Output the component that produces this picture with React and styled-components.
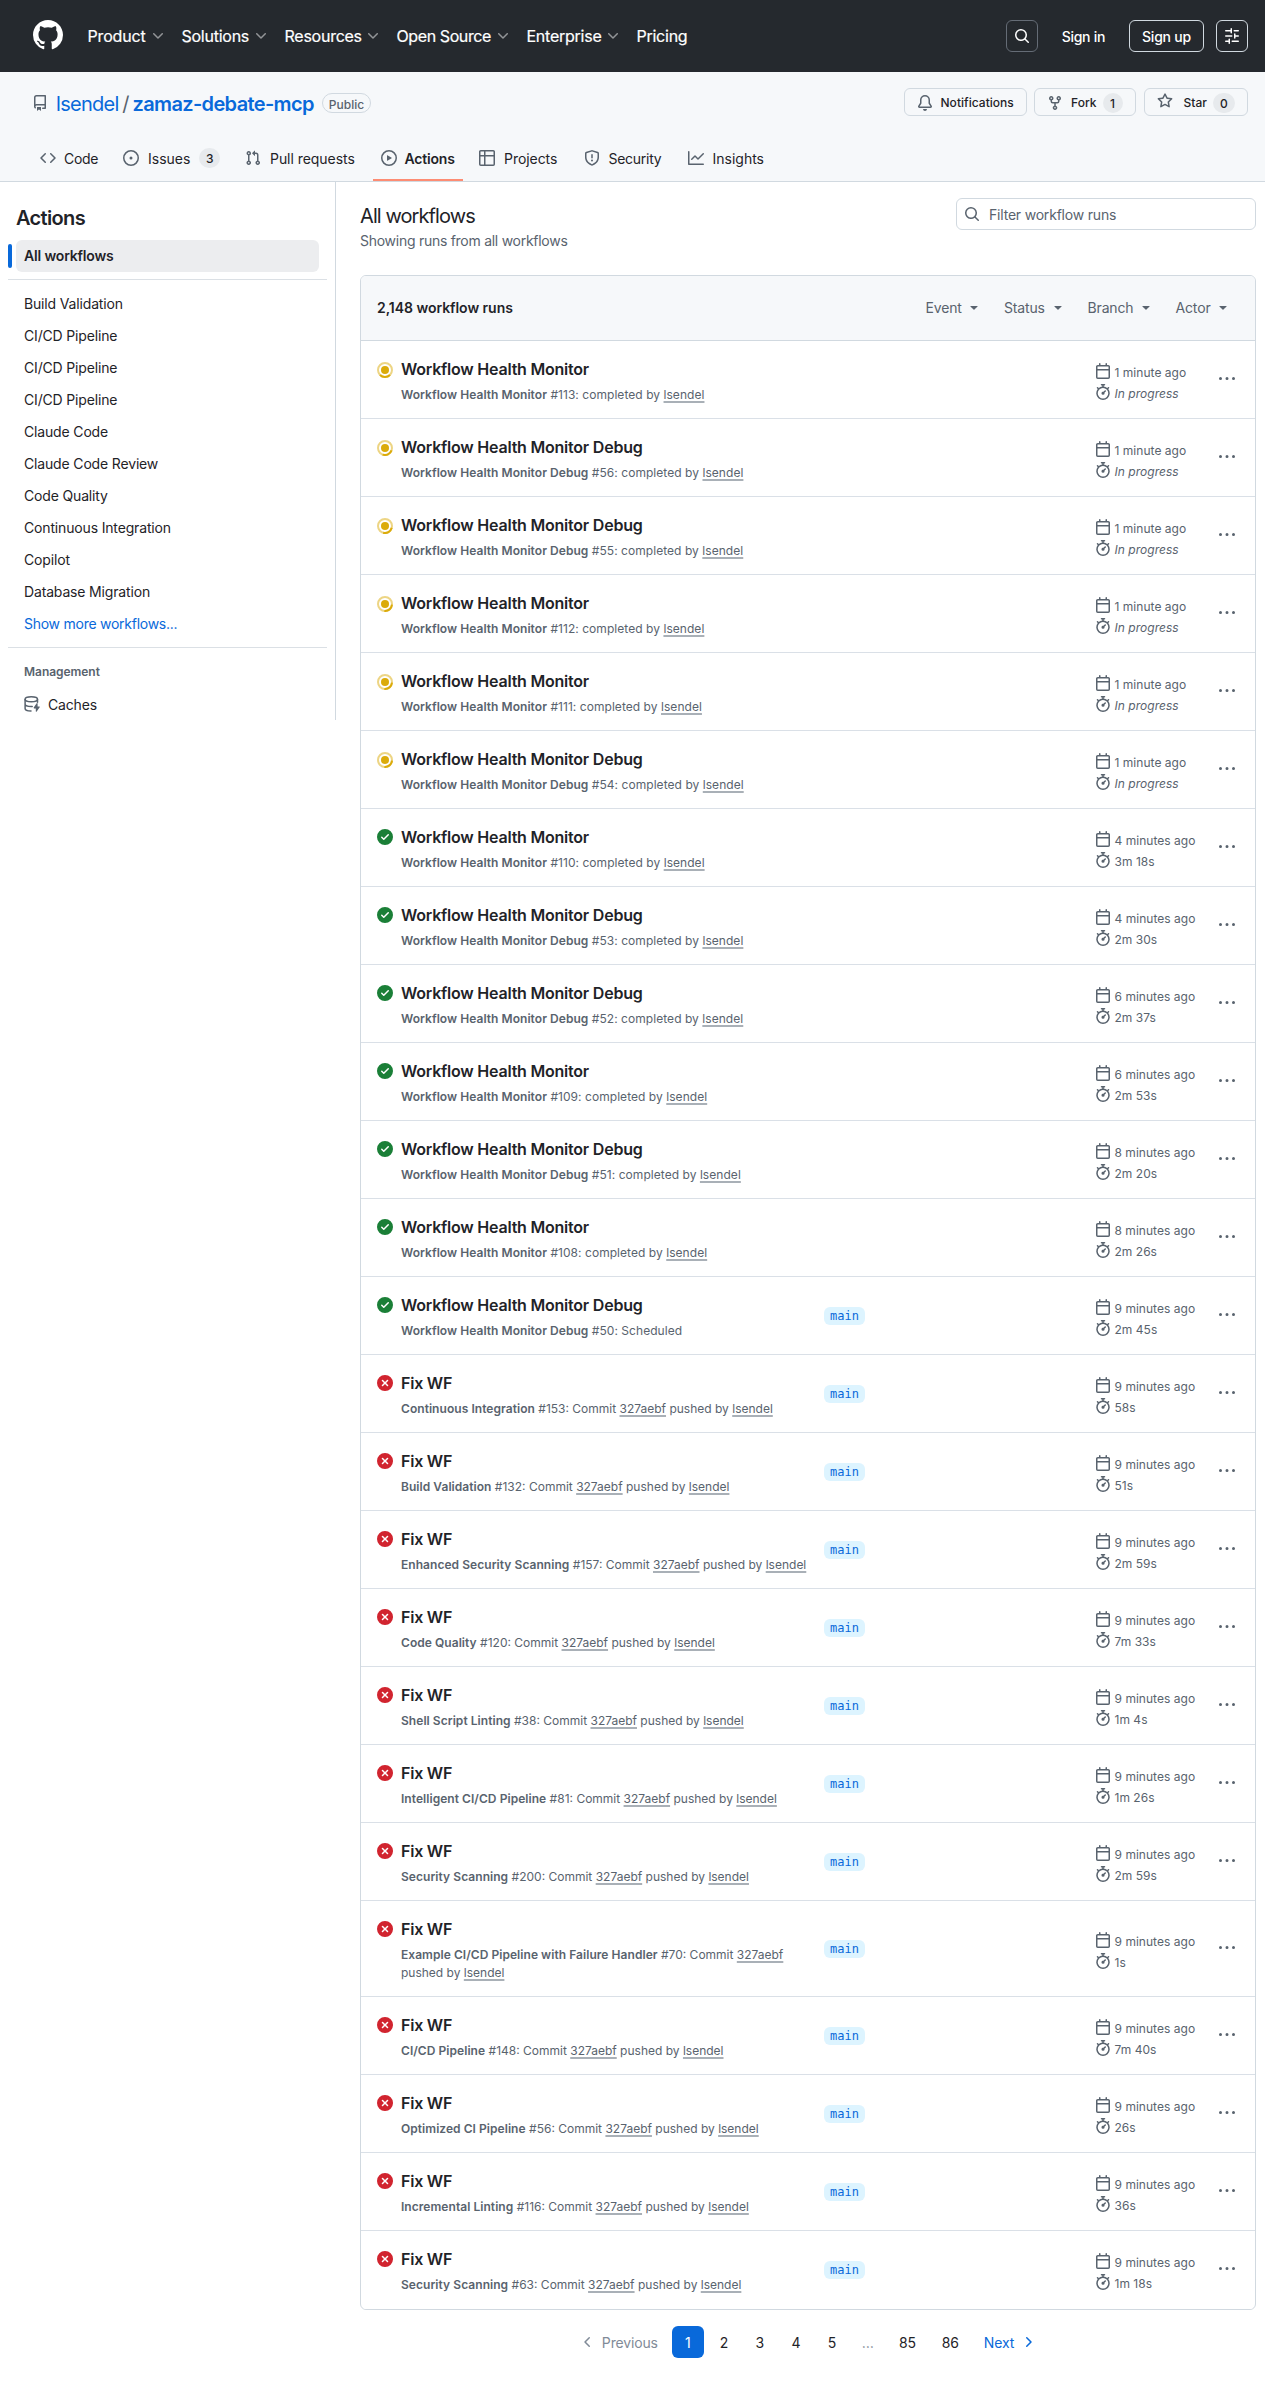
import React from 'react';
import styled, { createGlobalStyle, css } from 'styled-components';

const color = {
  fg: '#1f2328',
  muted: '#59636e',
  border: '#d1d9e0',
  subtle: '#f6f8fa',
  link: '#0969da',
  header: '#25292e',
  counter: '#e7eaed',
};

const GlobalStyle = createGlobalStyle`
  *, *::before, *::after { box-sizing: border-box; }
  body {
    margin: 0;
    background: #fff;
    color: ${color.fg};
    font-family: Inter, "Noto Sans", "Liberation Sans", sans-serif;
    font-size: 14px;
    line-height: 21px;
    letter-spacing: -0.15px;
    -webkit-font-smoothing: antialiased;
  }
  a { color: inherit; text-decoration: none; }
  h1, h2, p, ul { margin: 0; padding: 0; font-weight: 400; }
  ul { list-style: none; }
  button { font: inherit; letter-spacing: inherit; color: inherit; background: none; border: 0; padding: 0; }
`;

const paths = {
  github:
    'M8 0c4.42 0 8 3.58 8 8a8.013 8.013 0 0 1-5.45 7.59c-.4.08-.55-.17-.55-.38 0-.27.01-1.13.01-2.2 0-.75-.25-1.23-.54-1.48 1.78-.2 3.65-.88 3.65-3.95 0-.88-.31-1.59-.82-2.15.08-.2.36-1.02-.08-2.12 0 0-.67-.22-2.2.82-.64-.18-1.32-.27-2-.27-.68 0-1.36.09-2 .27-1.53-1.03-2.2-.82-2.2-.82-.44 1.1-.16 1.92-.08 2.12-.51.56-.82 1.28-.82 2.15 0 3.06 1.86 3.75 3.64 3.95-.23.2-.44.55-.51 1.07-.46.21-1.61.55-2.33-.66-.15-.24-.6-.83-1.23-.82-.67.01-.27.38.01.53.34.19.73.9.82 1.13.16.45.68 1.31 2.69.94 0 .67.01 1.3.01 1.49 0 .21-.15.45-.55.38A7.995 7.995 0 0 1 0 8c0-4.42 3.58-8 8-8Z',
  repo: 'M2 2.5A2.5 2.5 0 0 1 4.5 0h8.75a.75.75 0 0 1 .75.75v12.5a.75.75 0 0 1-.75.75h-2.5a.75.75 0 0 1 0-1.5h1.75v-2h-8a1 1 0 0 0-.714 1.7.75.75 0 1 1-1.072 1.05A2.495 2.495 0 0 1 2 11.5Zm10.5-1h-8a1 1 0 0 0-1 1v6.708A2.486 2.486 0 0 1 4.5 9h8ZM5 12.25a.25.25 0 0 1 .25-.25h3.5a.25.25 0 0 1 .25.25v3.25a.25.25 0 0 1-.4.2l-1.45-1.087a.249.249 0 0 0-.3 0L5.4 15.7a.25.25 0 0 1-.4-.2Z',
  code: 'm11.28 3.22 4.25 4.25a.75.75 0 0 1 0 1.06l-4.25 4.25a.749.749 0 0 1-1.275-.326.749.749 0 0 1 .215-.734L13.94 8l-3.72-3.72a.749.749 0 0 1 .326-1.275.749.749 0 0 1 .734.215Zm-6.56 0a.751.751 0 0 1 1.042.018.751.751 0 0 1 .018 1.042L2.06 8l3.72 3.72a.749.749 0 0 1-.326 1.275.749.749 0 0 1-.734-.215L.47 8.53a.75.75 0 0 1 0-1.06Z',
  issue:
    'M8 9.5a1.5 1.5 0 1 0 0-3 1.5 1.5 0 0 0 0 3ZM8 0a8 8 0 1 1 0 16A8 8 0 0 1 8 0ZM1.5 8a6.5 6.5 0 1 0 13 0 6.5 6.5 0 0 0-13 0Z',
  pull: 'M1.5 3.25a2.25 2.25 0 1 1 3 2.122v5.256a2.251 2.251 0 1 1-1.5 0V5.372A2.25 2.25 0 0 1 1.5 3.25Zm5.677-.177L9.573.677A.25.25 0 0 1 10 .854V2.5h1A2.5 2.5 0 0 1 13.5 5v5.628a2.251 2.251 0 1 1-1.5 0V5a1 1 0 0 0-1-1h-1v1.646a.25.25 0 0 1-.427.177L7.177 3.427a.25.25 0 0 1 0-.354ZM3.75 2.5a.75.75 0 1 0 0 1.5.75.75 0 0 0 0-1.5Zm0 9.5a.75.75 0 1 0 0 1.5.75.75 0 0 0 0-1.5Zm8.25.75a.75.75 0 1 0 1.5 0 .75.75 0 0 0-1.5 0Z',
  play: 'M8 0a8 8 0 1 1 0 16A8 8 0 0 1 8 0ZM1.5 8a6.5 6.5 0 1 0 13 0 6.5 6.5 0 0 0-13 0Zm4.879-2.773 4.264 2.559a.25.25 0 0 1 0 .428l-4.264 2.559A.25.25 0 0 1 6 10.559V5.442a.25.25 0 0 1 .379-.215Z',
  table:
    'M0 1.75C0 .784.784 0 1.75 0h12.5C15.216 0 16 .784 16 1.75v12.5A1.75 1.75 0 0 1 14.25 16H1.75A1.75 1.75 0 0 1 0 14.25ZM6.5 6.5v8h7.75a.25.25 0 0 0 .25-.25V6.5Zm8-1.5V1.75a.25.25 0 0 0-.25-.25H6.5V5Zm-13 1.5v7.75c0 .138.112.25.25.25H5v-8ZM5 5V1.5H1.75a.25.25 0 0 0-.25.25V5Z',
  shield:
    'M7.467.133a1.748 1.748 0 0 1 1.066 0l5.25 1.68A1.75 1.75 0 0 1 15 3.48V7c0 1.566-.32 3.182-1.303 4.682-.983 1.498-2.585 2.813-5.032 3.855a1.697 1.697 0 0 1-1.33 0c-2.447-1.042-4.049-2.357-5.032-3.855C1.32 10.182 1 8.566 1 7V3.48a1.75 1.75 0 0 1 1.217-1.667Zm.61 1.429a.25.25 0 0 0-.153 0l-5.25 1.68a.25.25 0 0 0-.174.238V7c0 1.358.275 2.666 1.057 3.86.784 1.194 2.121 2.34 4.366 3.297a.196.196 0 0 0 .154 0c2.245-.956 3.582-2.104 4.366-3.298C13.225 9.666 13.5 8.36 13.5 7V3.48a.251.251 0 0 0-.174-.237l-5.25-1.68ZM8.75 4.75v3a.75.75 0 0 1-1.5 0v-3a.75.75 0 0 1 1.5 0ZM9 10.5a1 1 0 1 1-2 0 1 1 0 0 1 2 0Z',
  graph:
    'M1.5 1.75V13.5h13.75a.75.75 0 0 1 0 1.5H.75a.75.75 0 0 1-.75-.75V1.75a.75.75 0 0 1 1.5 0Zm14.28 2.53-5.25 5.25a.75.75 0 0 1-1.06 0L7 7.06 4.28 9.78a.751.751 0 0 1-1.042-.018.751.751 0 0 1-.018-1.042l3.25-3.25a.75.75 0 0 1 1.06 0L10 7.94l4.72-4.72a.751.751 0 0 1 1.042.018.751.751 0 0 1 .018 1.042Z',
  bell: 'M8 16a2 2 0 0 0 1.985-1.75c.017-.137-.097-.25-.235-.25h-3.5c-.138 0-.252.113-.235.25A2 2 0 0 0 8 16ZM3 5a5 5 0 0 1 10 0v2.947c0 .05.015.098.042.139l1.703 2.555A1.519 1.519 0 0 1 13.482 13H2.518a1.516 1.516 0 0 1-1.263-2.36l1.703-2.554A.255.255 0 0 0 3 7.947Zm5-3.5A3.5 3.5 0 0 0 4.5 5v2.947c0 .346-.102.683-.294.97l-1.703 2.556a.017.017 0 0 0-.003.01l.001.006c0 .002.002.004.004.006l.006.004.007.001h10.964l.007-.001.006-.004.004-.006.001-.007a.017.017 0 0 0-.003-.01l-1.703-2.554a1.745 1.745 0 0 1-.294-.97V5A3.5 3.5 0 0 0 8 1.5Z',
  fork: 'M5 5.372v.878c0 .414.336.75.75.75h4.5a.75.75 0 0 0 .75-.75v-.878a2.25 2.25 0 1 1 1.5 0v.878a2.25 2.25 0 0 1-2.25 2.25h-1.5v2.128a2.251 2.251 0 1 1-1.5 0V8.5h-1.5A2.25 2.25 0 0 1 3.5 6.25v-.878a2.25 2.25 0 1 1 1.5 0ZM5 3.25a.75.75 0 1 0-1.5 0 .75.75 0 0 0 1.5 0Zm6.75.75a.75.75 0 1 0 0-1.5.75.75 0 0 0 0 1.5Zm-3 8.75a.75.75 0 1 0-1.5 0 .75.75 0 0 0 1.5 0Z',
  star: 'M8 .25a.75.75 0 0 1 .673.418l1.882 3.815 4.21.612a.75.75 0 0 1 .416 1.279l-3.046 2.97.719 4.192a.751.751 0 0 1-1.088.791L8 12.347l-3.766 1.98a.75.75 0 0 1-1.088-.79l.72-4.194L.818 6.374a.75.75 0 0 1 .416-1.28l4.21-.611L7.327.668A.75.75 0 0 1 8 .25Zm0 2.445L6.615 5.5a.75.75 0 0 1-.564.41l-3.097.45 2.24 2.184a.75.75 0 0 1 .216.664l-.528 3.084 2.769-1.456a.75.75 0 0 1 .698 0l2.77 1.456-.53-3.084a.75.75 0 0 1 .216-.664l2.24-2.183-3.096-.45a.75.75 0 0 1-.564-.41L8 2.694Z',
  search:
    'M10.68 11.74a6 6 0 0 1-7.922-8.982 6 6 0 0 1 8.982 7.922l3.04 3.04a.749.749 0 0 1-.326 1.275.749.749 0 0 1-.734-.215ZM11.5 7a4.499 4.499 0 1 0-8.997 0A4.499 4.499 0 0 0 11.5 7Z',
  chevronDown:
    'M12.78 5.22a.749.749 0 0 1 0 1.06l-4.25 4.25a.749.749 0 0 1-1.06 0L3.22 6.28a.749.749 0 1 1 1.06-1.06L8 8.939l3.72-3.719a.749.749 0 0 1 1.06 0Z',
  chevronLeft:
    'M9.78 12.78a.75.75 0 0 1-1.06 0L4.47 8.53a.75.75 0 0 1 0-1.06l4.25-4.25a.751.751 0 0 1 1.042.018.751.751 0 0 1 .018 1.042L6.06 8l3.72 3.72a.75.75 0 0 1 0 1.06Z',
  chevronRight:
    'M6.22 3.22a.75.75 0 0 1 1.06 0l4.25 4.25a.75.75 0 0 1 0 1.06l-4.25 4.25a.751.751 0 0 1-1.042-.018.751.751 0 0 1-.018-1.042L9.94 8 6.22 4.28a.75.75 0 0 1 0-1.06Z',
  triangle:
    'm4.427 7.427 3.396 3.396a.25.25 0 0 0 .354 0l3.396-3.396A.25.25 0 0 0 11.396 7H4.604a.25.25 0 0 0-.177.427Z',
  sliders:
    'M15 2.75a.75.75 0 0 1-.75.75h-4a.75.75 0 0 1 0-1.5h4a.75.75 0 0 1 .75.75Zm-8.5.75v1.25a.75.75 0 0 0 1.5 0v-4a.75.75 0 0 0-1.5 0V2H1.75a.75.75 0 0 0 0 1.5H6.5Zm1.25 5.25a.75.75 0 0 0 0-1.5h-6a.75.75 0 0 0 0 1.5h6ZM15 8a.75.75 0 0 1-.75.75H11.5V10a.75.75 0 1 1-1.5 0V6a.75.75 0 0 1 1.5 0v1.25h2.75A.75.75 0 0 1 15 8Zm-9 5.25v-2a.75.75 0 0 0-1.5 0v1.25H1.75a.75.75 0 0 0 0 1.5H4.5v1.25a.75.75 0 0 0 1.5 0v-2Zm9 0a.75.75 0 0 1-.75.75h-6a.75.75 0 0 1 0-1.5h6a.75.75 0 0 1 .75.75Z',
  calendar:
    'M4.75 0a.75.75 0 0 1 .75.75V2h5V.75a.75.75 0 0 1 1.5 0V2h1.25c.966 0 1.75.784 1.75 1.75v10.5A1.75 1.75 0 0 1 13.25 16H2.75A1.75 1.75 0 0 1 1 14.25V3.75C1 2.784 1.784 2 2.75 2H4V.75A.75.75 0 0 1 4.75 0ZM2.5 7.5v6.75c0 .138.112.25.25.25h10.5a.25.25 0 0 0 .25-.25V7.5Zm10.75-4H2.75a.25.25 0 0 0-.25.25V6h11V3.75a.25.25 0 0 0-.25-.25Z',
  stopwatch:
    'M5.75.75A.75.75 0 0 1 6.5 0h3a.75.75 0 0 1 0 1.5h-.75v1l-.001.041a6.724 6.724 0 0 1 3.464 1.435l.007-.006.75-.75a.749.749 0 0 1 1.275.326.749.749 0 0 1-.215.734l-.75.75-.006.007a6.75 6.75 0 1 1-10.548 0L2.72 5.03l-.75-.75a.751.751 0 0 1 .018-1.042.751.751 0 0 1 1.042-.018l.75.75.007.006A6.72 6.72 0 0 1 7.25 2.541V1.5H6.5a.75.75 0 0 1-.75-.75ZM8 14.5a5.25 5.25 0 1 0-.001-10.501A5.25 5.25 0 0 0 8 14.5Zm.389-6.7 1.33-1.33a.75.75 0 1 1 1.061 1.06L9.45 8.861A1.503 1.503 0 0 1 8 10.75a1.499 1.499 0 1 1 .389-2.95Z',
  kebab:
    'M8 9a1.5 1.5 0 1 0 0-3 1.5 1.5 0 0 0 0 3ZM1.5 9a1.5 1.5 0 1 0 0-3 1.5 1.5 0 0 0 0 3Zm13 0a1.5 1.5 0 1 0 0-3 1.5 1.5 0 0 0 0 3Z',
  success:
    'M8 16A8 8 0 1 1 8 0a8 8 0 0 1 0 16Zm3.78-9.72a.751.751 0 0 0-.018-1.042.751.751 0 0 0-1.042-.018L6.75 9.19 5.28 7.72a.751.751 0 0 0-1.042.018.751.751 0 0 0-.018 1.042l2 2a.75.75 0 0 0 1.06 0Z',
  failure:
    'M2.343 13.657A8 8 0 1 1 13.658 2.343 8 8 0 0 1 2.343 13.657ZM6.03 4.97a.751.751 0 0 0-1.042.018.751.751 0 0 0-.018 1.042L6.94 8 4.97 9.97a.749.749 0 0 0 .326 1.275.749.749 0 0 0 .734-.215L8 9.06l1.97 1.97a.749.749 0 0 0 1.275-.326.749.749 0 0 0-.215-.734L9.06 8l1.97-1.97a.749.749 0 0 0-.326-1.275.749.749 0 0 0-.734.215L8 6.94Z',
};

const Svg = styled.svg`
  display: block;
  flex: none;
  width: ${(p) => p.$size || 16}px;
  height: ${(p) => p.$size || 16}px;
  fill: ${(p) => p.$tint || 'currentColor'};
`;

const Icon = ({ name, size, tint, className }) => (
  <Svg viewBox="0 0 16 16" $size={size} $tint={tint} className={className} aria-hidden="true">
    <path d={paths[name]} />
  </Svg>
);

const Spacer = styled.div`
  flex: 1;
`;

/* ---------- global header ---------- */

const Header = styled.header`
  display: flex;
  align-items: center;
  height: 72px;
  padding: 0 17px 0 33px;
  background: ${color.header};
  color: #fff;
`;

const LogoLink = styled.a`
  margin: -2px 24px 0 0;
`;

const HeaderNav = styled.nav`
  display: flex;
  font-size: 16px;
  letter-spacing: -0.25px;
  -webkit-text-stroke: 0.2px currentColor;
`;

const HeaderLink = styled.a`
  display: flex;
  align-items: center;
  justify-content: space-between;
  width: ${(p) => p.$width}px;
  padding: 0 15px 0 0.5px;
  letter-spacing: ${(p) => p.$tracking || -0.25}px;
  white-space: nowrap;
`;

const Chevron = styled(Icon)`
  opacity: 0.5;
`;

const SquareButton = styled.button`
  display: grid;
  place-items: center;
  width: 32px;
  height: 32px;
  border: 1px solid ${(p) => (p.$dim ? '#656c76' : color.border)};
  border-radius: 6px;
`;

const SignIn = styled.a`
  margin: 0 24px;
  font-weight: 500;
  letter-spacing: -0.3px;
`;

const SignUp = styled.a`
  display: grid;
  place-items: center;
  width: 75px;
  height: 32px;
  margin-right: 12px;
  border: 1px solid ${color.border};
  border-radius: 6px;
  font-weight: 500;
  letter-spacing: -0.22px;
`;

/* ---------- repository header ---------- */

const RepoHeader = styled.section`
  height: 110px;
  background: ${color.subtle};
  border-bottom: 1px solid ${color.border};
`;

const RepoBar = styled.div`
  display: flex;
  align-items: flex-start;
  height: 64px;
  padding: 16px 17px 0 32px;
`;

const RepoTitle = styled.h1`
  display: flex;
  align-items: center;
  height: 32px;
  color: ${color.muted};
  font-size: 20px;
  letter-spacing: -0.7px;
`;

const RepoIcon = styled(Icon)`
  margin: -2px 8px 0 0;
`;

const Owner = styled.a`
  width: 62.5px;
  color: ${color.link};
`;

const Slash = styled.span`
  width: 14px;
  text-align: center;
`;

const RepoName = styled.a`
  width: 190px;
  color: ${color.link};
  font-weight: 600;
  letter-spacing: -0.64px;
`;

const Visibility = styled.span`
  display: grid;
  place-items: center;
  width: 49px;
  height: 20px;
  margin: -2px 0 0 -0.5px;
  border: 1px solid ${color.border};
  border-radius: 10px;
  color: ${color.muted};
  font-size: 12px;
  font-weight: 500;
  letter-spacing: 0;
`;

const RepoActions = styled.div`
  display: flex;
  gap: 7.5px;
`;

const RepoButton = styled.button`
  display: flex;
  align-items: center;
  width: ${(p) => p.$width}px;
  height: 28px;
  padding: 1px 0 0 12px;
  border: 1px solid ${color.border};
  border-radius: 6px;
  font-size: 12px;
  font-weight: 500;
  letter-spacing: 0.03px;
  svg {
    margin: 0 ${(p) => p.$gap}px ${(p) => p.$lift || 0}px 0;
    color: ${color.muted};
  }
`;

const Counter = styled.span`
  display: grid;
  place-items: center;
  min-width: ${(p) => p.$width || 20}px;
  height: 20px;
  margin-left: ${(p) => p.$gap || 6}px;
  border-radius: 10px;
  background: ${color.counter};
  font-size: 12px;
  font-weight: 500;
`;

const Tabs = styled.nav`
  display: flex;
  gap: 8px;
  padding-left: 32px;
`;

const Tab = styled.a`
  display: flex;
  align-items: center;
  width: ${(p) => p.$width}px;
  height: 45px;
  padding: 0 8px 1px;
  white-space: nowrap;
  letter-spacing: ${(p) => p.$tracking}px;
  ${(p) =>
    p.$active &&
    css`
      font-weight: 600;
      box-shadow: inset 0 -2px #fd8c73;
    `}
  svg {
    margin-right: ${(p) => p.$gap || 9}px;
    color: ${color.muted};
  }
`;

/* ---------- layout ---------- */

const Body = styled.div`
  display: flex;
  align-items: flex-start;
`;

/* ---------- sidebar ---------- */

const Sidebar = styled.aside`
  width: 336px;
  height: 538px;
  padding: 24px 8px 0;
  border-right: 1px solid ${color.border};
`;

const SidebarTitle = styled.h2`
  height: 34px;
  padding-left: 8px;
  font-size: 20px;
  font-weight: 600;
  line-height: 24px;
  letter-spacing: -0.65px;
`;

const ActiveRow = styled.div`
  display: flex;
  align-items: center;
  gap: 4px;
  &::before {
    content: '';
    width: 4px;
    height: 24px;
    border-radius: 6px;
    background: ${color.link};
  }
`;

const ActiveItem = styled.a`
  width: 303px;
  height: 32px;
  padding: 0 8px;
  border-radius: 6px;
  background: #ecedef;
  font-weight: 600;
  line-height: 32px;
  letter-spacing: -0.16px;
`;

const Divider = styled.hr`
  height: 1px;
  margin: ${(p) => p.$space};
  border: 0;
  background: #dbe0e5;
`;

const WorkflowItem = styled.li`
  display: flex;
  align-items: center;
  gap: 8px;
  height: 32px;
  padding-left: 16px;
  color: ${(p) => (p.$link ? color.link : color.fg)};
  letter-spacing: ${(p) => (p.$link ? -0.26 : -0.16)}px;
`;

const GroupTitle = styled.p`
  padding: 15px 16px 7px;
  color: ${color.muted};
  font-size: 12px;
  font-weight: 600;
  line-height: 18px;
  letter-spacing: -0.04px;
`;

/* ---------- main ---------- */

const Main = styled.main`
  width: 920px;
  padding: 16px 0 0 24px;
`;

const MainHead = styled.div`
  display: flex;
  justify-content: space-between;
  height: 77px;
`;

const PageTitle = styled.h2`
  margin-top: 3px;
  font-size: 20px;
  line-height: 30px;
  letter-spacing: -0.92px;
`;

const Subtitle = styled.p`
  margin-top: -1px;
  color: ${color.muted};
  letter-spacing: -0.27px;
`;

const SearchBox = styled.label`
  display: flex;
  align-items: center;
  gap: 9px;
  width: 300px;
  height: 32px;
  padding: 0 7px;
  border: 1px solid ${color.border};
  border-radius: 6px;
  color: ${color.muted};
  letter-spacing: -0.2px;
`;

const Panel = styled.section`
  border: 1px solid ${color.border};
  border-radius: 6px;
  overflow: hidden;
`;

const PanelHead = styled.div`
  display: flex;
  align-items: center;
  gap: 22px;
  height: 65px;
  padding: 0 24.5px 2px 16px;
  border-bottom: 1px solid ${color.border};
  background: ${color.subtle};
`;

const RunCount = styled.strong`
  font-weight: 600;
  letter-spacing: -0.04px;
`;

const Filter = styled.button`
  display: flex;
  align-items: center;
  justify-content: space-between;
  width: ${(p) => p.$width}px;
  color: ${color.muted};
`;

const Run = styled.article`
  display: flex;
  height: ${(p) => (p.$tall ? 96 : 78)}px;
  padding-left: 16px;
  border-bottom: 1px solid #dae0e7;
  &:last-child {
    border-bottom-color: #fff;
  }
`;

const StatusSlot = styled.div`
  width: 24px;
  padding-top: ${(p) => (p.$running ? 21 : 20)}px;
`;

const RunText = styled.div`
  width: 423px;
  padding: 16px 8px 0 0;
`;

const RunTitle = styled.a`
  display: block;
  font-size: 16px;
  font-weight: 600;
  line-height: 24px;
  letter-spacing: -0.22px;
`;

const RunMeta = styled.p`
  margin-top: 5px;
  color: ${color.muted};
  font-size: 12px;
  line-height: 18px;
  letter-spacing: ${(p) => (p.$commit ? 0 : 0.05)}px;
  b {
    font-weight: 600;
    letter-spacing: 0.05px;
  }
  a {
    text-decoration: underline 2px #a9b0b7;
    text-underline-offset: 2px;
    text-decoration-skip-ink: none;
  }
`;

const BranchSlot = styled.div`
  display: flex;
  align-items: center;
  width: 271px;
`;

const Branch = styled.a`
  padding: 0 6px;
  border-radius: 6px;
  background: #ddf4ff;
  color: ${color.link};
  font: 12px/18px "DejaVu Sans Mono", "Liberation Mono", monospace;
  letter-spacing: 0;
`;

const Times = styled.div`
  display: flex;
  flex-direction: column;
  justify-content: center;
  width: 124px;
  padding-top: 7px;
  color: ${color.muted};
  font-size: 12px;
  letter-spacing: 0.03px;
`;

const TimeLine = styled.span`
  display: flex;
  align-items: center;
  height: 20.5px;
  font-style: ${(p) => (p.$italic ? 'italic' : 'normal')};
  svg {
    margin: -3px 4px 0 -0.5px;
  }
`;

const MenuButton = styled.button`
  display: flex;
  align-items: center;
  padding-bottom: 2px;
  color: ${color.muted};
`;

const Pagination = styled.nav`
  display: flex;
  justify-content: center;
  gap: 4px;
  padding-top: 16px;
`;

const Page = styled.a`
  display: flex;
  align-items: center;
  justify-content: center;
  gap: 6px;
  min-width: ${(p) => (p.$wide ? 39 : 32)}px;
  height: 32px;
  padding: 0 10px;
  border-radius: 6px;
  color: ${(p) => p.$tint || color.fg};
  background: ${(p) => (p.$current ? color.link : 'transparent')};
`;

const Spinner = ({ turn }) => (
  <Svg viewBox="0 0 16 16" aria-hidden="true">
    <circle cx="8" cy="8" r="7" fill="none" stroke="#dbab0a" strokeOpacity="0.5" strokeWidth="2" />
    <path
      d="M12.95 12.95A7 7 0 0 1 3.05 12.95"
      transform={`rotate(${turn} 8 8)`}
      fill="none"
      stroke="#dbab0a"
      strokeWidth="2"
    />
    <circle cx="8" cy="8" r="4" fill="#dbab0a" />
  </Svg>
);

const CacheIcon = () => (
  <Svg viewBox="0 0 16 16" aria-hidden="true">
    <g fill="none" stroke={color.muted} strokeWidth="1.5" strokeLinecap="round">
      <ellipse cx="7.3" cy="3.3" rx="6.2" ry="2.5" />
      <path d="M1.1 3.5v9c0 1.3 2.5 2.5 5.9 2.6M13.5 3.5v2.7M1.1 8c0 1.3 2.6 2.5 6.2 2.5h.9" />
    </g>
    <path
      d="M12.7 7.2c.3-.4.9-.2.9.3v2.9h1.7c.4 0 .6.5.4.8l-3 4.4c-.3.4-.9.2-.9-.3v-2.9h-1.7c-.4 0-.6-.5-.4-.8Z"
      fill={color.muted}
    />
  </Svg>
);

const navItems = [
  ['Product', 94, -0.15],
  ['Solutions', 103],
  ['Resources', 112],
  ['Open Source', 130, -0.4],
  ['Enterprise', 110],
  ['Pricing', null],
];

const tabs = [
  { label: 'Code', icon: 'code', width: 75, tracking: -0.3, gap: 8 },
  { label: 'Issues', icon: 'issue', width: 114, tracking: 0, count: 3 },
  { label: 'Pull requests', icon: 'pull', width: 127.5, tracking: -0.05 },
  { label: 'Actions', icon: 'play', width: 90.5, tracking: -0.2, active: true, gap: 8 },
  { label: 'Projects', icon: 'table', width: 96.5, tracking: -0.05 },
  { label: 'Security', icon: 'shield', width: 96, tracking: -0.27 },
  { label: 'Insights', icon: 'graph', width: 91, tracking: 0 },
];

const workflows = [
  'Build Validation',
  'CI/CD Pipeline',
  'CI/CD Pipeline',
  'CI/CD Pipeline',
  'Claude Code',
  'Claude Code Review',
  'Code Quality',
  'Continuous Integration',
  'Copilot',
  'Database Migration',
];

const filters = [
  ['Event', 56.5],
  ['Status', 61.5],
  ['Branch', 66],
  ['Actor', 55],
];

const monitor = 'Workflow Health Monitor';
const debug = 'Workflow Health Monitor Debug';

const scheduled = [
  ['running', monitor, 113, '1 minute', 'In progress', 0],
  ['running', debug, 56, '1 minute', 'In progress', -25],
  ['running', debug, 55, '1 minute', 'In progress', -30],
  ['running', monitor, 112, '1 minute', 'In progress', -40],
  ['running', monitor, 111, '1 minute', 'In progress', -40],
  ['running', debug, 54, '1 minute', 'In progress', -40],
  ['success', monitor, 110, '4 minutes', '3m 18s'],
  ['success', debug, 53, '4 minutes', '2m 30s'],
  ['success', debug, 52, '6 minutes', '2m 37s'],
  ['success', monitor, 109, '6 minutes', '2m 53s'],
  ['success', debug, 51, '8 minutes', '2m 20s'],
  ['success', monitor, 108, '8 minutes', '2m 26s'],
  ['success', debug, 50, '9 minutes', '2m 45s'],
];

const commits = [
  ['Continuous Integration', 153, '58s'],
  ['Build Validation', 132, '51s'],
  ['Enhanced Security Scanning', 157, '2m 59s'],
  ['Code Quality', 120, '7m 33s'],
  ['Shell Script Linting', 38, '1m 4s'],
  ['Intelligent CI/CD Pipeline', 81, '1m 26s'],
  ['Security Scanning', 200, '2m 59s'],
  ['Example CI/CD Pipeline with Failure Handler', 70, '1s'],
  ['CI/CD Pipeline', 148, '7m 40s'],
  ['Optimized CI Pipeline', 56, '26s'],
  ['Incremental Linting', 116, '36s'],
  ['Security Scanning', 63, '1m 18s'],
];

const runs = [
  ...scheduled.map(([status, name, number, age, duration, turn]) => ({
    status,
    title: name,
    name,
    number,
    age,
    duration,
    turn,
    trigger: number === 50 ? 'schedule' : 'completed',
    branch: number === 50,
  })),
  ...commits.map(([name, number, duration]) => ({
    status: 'failure',
    title: 'Fix WF',
    name,
    number,
    age: '9 minutes',
    duration,
    trigger: 'commit',
    branch: true,
    tall: number === 70,
  })),
];

const Status = ({ status, turn }) => {
  if (status === 'running') return <Spinner turn={turn} />;
  return <Icon name={status} tint={status === 'success' ? '#1a7f37' : '#d1242f'} />;
};

const Trigger = ({ kind }) => {
  if (kind === 'schedule') return <>Scheduled</>;
  if (kind === 'completed')
    return (
      <>
        completed by <a href="#">lsendel</a>
      </>
    );
  return (
    <>
      Commit <a href="#">327aebf</a> pushed by <a href="#">lsendel</a>
    </>
  );
};

const RunRow = ({ run }) => (
  <Run $tall={run.tall}>
    <StatusSlot $running={run.status === 'running'}>
      <Status status={run.status} turn={run.turn} />
    </StatusSlot>
    <RunText>
      <RunTitle href="#">{run.title}</RunTitle>
      <RunMeta $commit={run.trigger === 'commit'}>
        <b>{run.name}</b> #{run.number}: <Trigger kind={run.trigger} />
      </RunMeta>
    </RunText>
    <BranchSlot>{run.branch && <Branch href="#">main</Branch>}</BranchSlot>
    <Times>
      <TimeLine>
        <Icon name="calendar" />
        {run.age} ago
      </TimeLine>
      <TimeLine $italic={run.status === 'running'}>
        <Icon name="stopwatch" />
        {run.duration}
      </TimeLine>
    </Times>
    <MenuButton aria-label="Show options">
      <Icon name="kebab" />
    </MenuButton>
  </Run>
);

export default function App() {
  return (
    <>
      <GlobalStyle />
      <Header>
        <LogoLink href="#">
          <Icon name="github" size={30} />
        </LogoLink>
        <HeaderNav>
          {navItems.map(([label, width, tracking]) => (
            <HeaderLink href="#" key={label} $width={width} $tracking={tracking}>
              {label}
              {width && <Chevron name="chevronDown" />}
            </HeaderLink>
          ))}
        </HeaderNav>
        <Spacer />
        <SquareButton $dim aria-label="Search">
          <Icon name="search" />
        </SquareButton>
        <SignIn href="#">Sign in</SignIn>
        <SignUp href="#">Sign up</SignUp>
        <SquareButton aria-label="Appearance settings">
          <Icon name="sliders" />
        </SquareButton>
      </Header>

      <RepoHeader>
        <RepoBar>
          <RepoTitle>
            <RepoIcon name="repo" />
            <Owner href="#">lsendel</Owner>
            <Slash>/</Slash>
            <RepoName href="#">zamaz-debate-mcp</RepoName>
            <Visibility>Public</Visibility>
          </RepoTitle>
          <Spacer />
          <RepoActions>
            <RepoButton $width={123} $gap={8}>
              <Icon name="bell" />
              Notifications
            </RepoButton>
            <RepoButton $width={102} $gap={8}>
              <Icon name="fork" />
              Fork
              <Counter>1</Counter>
            </RepoButton>
            <RepoButton $width={104.5} $gap={11} $lift={4}>
              <Icon name="star" />
              Star
              <Counter $width={22}>0</Counter>
            </RepoButton>
          </RepoActions>
        </RepoBar>
        <Tabs>
          {tabs.map((tab) => (
            <Tab
              href="#"
              key={tab.label}
              $width={tab.width}
              $tracking={tab.tracking}
              $gap={tab.gap}
              $active={tab.active}
            >
              <Icon name={tab.icon} />
              {tab.label}
              {tab.count && (
                <Counter $width={21} $gap={9}>
                  {tab.count}
                </Counter>
              )}
            </Tab>
          ))}
        </Tabs>
      </RepoHeader>

      <Body>
        <Sidebar>
          <SidebarTitle>Actions</SidebarTitle>
          <ActiveRow>
            <ActiveItem href="#">All workflows</ActiveItem>
          </ActiveRow>
          <Divider $space="7px 0 7px" />
          <ul>
            {workflows.map((name, index) => (
              <WorkflowItem key={index}>{name}</WorkflowItem>
            ))}
            <WorkflowItem $link>Show more workflows...</WorkflowItem>
          </ul>
          <Divider $space="8px 0 0" />
          <GroupTitle>Management</GroupTitle>
          <ul>
            <WorkflowItem>
              <CacheIcon />
              Caches
            </WorkflowItem>
          </ul>
        </Sidebar>

        <Main>
          <MainHead>
            <div>
              <PageTitle>All workflows</PageTitle>
              <Subtitle>Showing runs from all workflows</Subtitle>
            </div>
            <SearchBox>
              <Icon name="search" />
              Filter workflow runs
            </SearchBox>
          </MainHead>

          <Panel>
            <PanelHead>
              <RunCount>2,148 workflow runs</RunCount>
              <Spacer />
              {filters.map(([label, width]) => (
                <Filter key={label} $width={width}>
                  {label}
                  <Icon name="triangle" />
                </Filter>
              ))}
            </PanelHead>
            {runs.map((run, index) => (
              <RunRow key={index} run={run} />
            ))}
          </Panel>

          <Pagination>
            <Page $tint="#818b98">
              <Icon name="chevronLeft" />
              Previous
            </Page>
            <Page $tint="#fff" $current>
              1
            </Page>
            {['2', '3', '4', '5'].map((page) => (
              <Page key={page} href="#">
                {page}
              </Page>
            ))}
            <Page $tint="#818b98">…</Page>
            <Page href="#" $wide>
              85
            </Page>
            <Page href="#" $wide>
              86
            </Page>
            <Page href="#" $tint={color.link}>
              Next
              <Icon name="chevronRight" />
            </Page>
          </Pagination>
        </Main>
      </Body>
    </>
  );
}
